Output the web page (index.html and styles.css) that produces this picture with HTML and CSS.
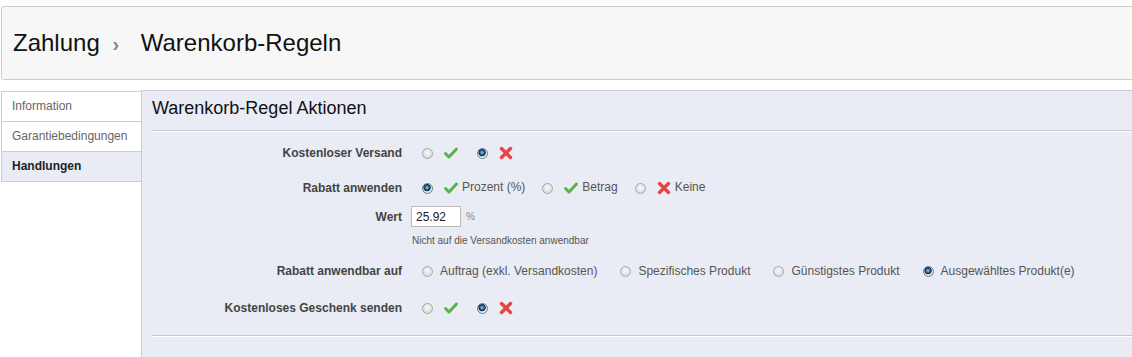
FILE: index.html
```html
<!DOCTYPE html>
<html lang="de">
<head>
  <meta charset="UTF-8" />
  <title>Warenkorb-Regeln</title>
  <link rel="stylesheet" href="styles.css">
</head>
<body>
  <header class="toolbar">
    <h1>Zahlung <span class="sep">&rsaquo;</span> Warenkorb-Regeln</h1>
  </header>
  <div class="layout">
    <ul class="tabs">
      <li>Information</li>
      <li>Garantiebedingungen</li>
      <li class="active">Handlungen</li>
    </ul>
    <section class="panel">
      <h2>Warenkorb-Regel Aktionen</h2>
      <div class="rows">
        <div class="row r1">
          <label>Kostenloser Versand</label>
          <div class="opts">
            <span class="radio"></span><svg class="ico" viewBox="0 0 16 16"><path class="ok" d="M2.5 8.5 L6 12 L13.5 4"/></svg>
            <span class="radio on"></span><svg class="ico" viewBox="0 0 16 16"><path class="no" d="M3.5 3.5 L12.5 12.5 M12.5 3.5 L3.5 12.5"/></svg>
          </div>
        </div>
        <div class="row r2">
          <label>Rabatt anwenden</label>
          <div class="opts">
            <span class="radio on"></span><svg class="ico" viewBox="0 0 16 16"><path class="ok" d="M2.5 8.5 L6 12 L13.5 4"/></svg><span class="txt">Prozent (%)</span>
            <span class="radio"></span><svg class="ico" viewBox="0 0 16 16"><path class="ok" d="M2.5 8.5 L6 12 L13.5 4"/></svg><span class="txt">Betrag</span>
            <span class="radio"></span><svg class="ico" viewBox="0 0 16 16"><path class="no" d="M3.5 3.5 L12.5 12.5 M12.5 3.5 L3.5 12.5"/></svg><span class="txt">Keine</span>
          </div>
        </div>
        <div class="row r3">
          <label>Wert</label>
          <div class="opts">
            <input class="val" type="text" value="25.92"><span class="unit">%</span>
          </div>
        </div>
        <p class="help">Nicht auf die Versandkosten anwendbar</p>
        <div class="row r4">
          <label>Rabatt anwendbar auf</label>
          <div class="opts">
            <span class="radio"></span><span class="txt">Auftrag (exkl. Versandkosten)</span>
            <span class="radio"></span><span class="txt">Spezifisches Produkt</span>
            <span class="radio"></span><span class="txt">Günstigstes Produkt</span>
            <span class="radio on"></span><span class="txt">Ausgewähltes Produkt(e)</span>
          </div>
        </div>
        <div class="row r5">
          <label>Kostenloses Geschenk senden</label>
          <div class="opts">
            <span class="radio"></span><svg class="ico" viewBox="0 0 16 16"><path class="ok" d="M2.5 8.5 L6 12 L13.5 4"/></svg>
            <span class="radio on"></span><svg class="ico" viewBox="0 0 16 16"><path class="no" d="M3.5 3.5 L12.5 12.5 M12.5 3.5 L3.5 12.5"/></svg>
          </div>
        </div>
      </div>
      <div class="rule"></div>
    </section>
  </div>
</body>
</html>
```

FILE: styles.css
```css
body {
  margin: 0;
  background: #ffffff;
  font-family: "Liberation Sans", Arial, sans-serif;
  overflow: hidden;
}
.toolbar {
  margin: 6px -10px 0 1px;
  height: 72px;
  background: #f7f7f7;
  border: 1px solid #cccccc;
  border-radius: 3px;
  display: flex;
  align-items: center;
}
.toolbar h1 {
  margin: 0 0 0 11px;
  font-size: 24px;
  font-weight: normal;
  color: #111111;
}
.sep {
  color: #888888;
  font-size: 20px;
  font-weight: bold;
  margin: 0 15px 0 6px;
}
.layout {
  display: flex;
  margin-top: 10px;
}
.tabs {
  list-style: none;
  margin: 1px 0 0 1px;
  padding: 0;
  width: 140px;
  flex: none;
  align-self: flex-start;
  border-top: 1px solid #cccccc;
}
.tabs li {
  height: 29px;
  line-height: 29px;
  padding-left: 10px;
  font-size: 12px;
  color: #666666;
  background: #ffffff;
  border: 1px solid #cccccc;
  border-top: none;
  border-right: none;
}
.tabs li.active {
  background: #e9ecf4;
  color: #222222;
  font-weight: bold;
}
.panel {
  flex: 1;
  height: 280px;
  background: #e9ecf4;
  border-top: 1px solid #cccccc;
  border-left: 1px solid #cccccc;
}
.panel h2 {
  margin: 0 0 0 10px;
  padding: 7px 0 0;
  box-sizing: border-box;
  height: 40px;
  font-size: 18px;
  font-weight: normal;
  color: #111111;
  border-bottom: 1px solid #c8c8c8;
  box-shadow: 0 1px 0 #ffffff;
}
.rows { padding-top: 12px; }
.row {
  display: flex;
  align-items: center;
  height: 20px;
}
.row label {
  width: 260px;
  flex: none;
  text-align: right;
  font-size: 12px;
  font-weight: bold;
  color: #444444;
}
.opts {
  display: flex;
  align-items: center;
  margin-left: 20px;
  font-size: 12px;
  color: #555555;
}
.r2 { margin-top: 15px; }
.r3 { margin-top: 8px; height: 21px; }
.r4 { margin-top: 15px; }
.r5 { margin-top: 17px; }
.radio {
  width: 11px;
  height: 11px;
  box-sizing: border-box;
  border: 1px solid #a8a8a8;
  border-radius: 50%;
  background: radial-gradient(circle at 50% 40%, #fafafa 0, #dcdcdc 70%, #c4c4c4 100%);
  margin-right: 10px;
  flex: none;
}
.radio.on {
  border-color: #6d7c89;
  background: radial-gradient(circle at 45% 40%, #9fd0f0 0, #1f5a86 30%, #0d2d48 45%, #dde3ea 55%, #f4f6f8 100%);
}
.ico {
  width: 16px;
  height: 16px;
  margin-right: 18px;
  flex: none;
}
.ico path { fill: none; stroke-width: 3; stroke-linecap: round; stroke-linejoin: round; }
.ico .ok { stroke: #58b04e; }
.ico .no { stroke: #e84545; stroke-width: 3.4; }
.opts .ico + .txt { margin-left: -15px; }
.txt { margin-right: 16px; }
.r2 .txt { position: relative; top: -1px; }
.r2 .txt + .radio { margin-left: 1px; }
.r4 .radio { margin-right: 7px; }
.r4 .txt { margin-right: 23px; }
.val {
  width: 50px;
  height: 21px;
  box-sizing: border-box;
  border: 1px solid #bbbbbb;
  background: #ffffff;
  padding: 2px 4px;
  margin: 0 0 0 -11px;
  font-family: "Liberation Sans", Arial, sans-serif;
  font-size: 12px;
  color: #222222;
}
.unit {
  font-size: 10px;
  color: #888888;
  margin-left: 5px;
}
.help {
  margin: 8px 0 0 270px;
  font-size: 10px;
  color: #555555;
}
.rule {
  margin: 17px 0 0 10px;
  border-top: 1px solid #c8c8c8;
  box-shadow: 0 1px 0 #ffffff;
}
```
